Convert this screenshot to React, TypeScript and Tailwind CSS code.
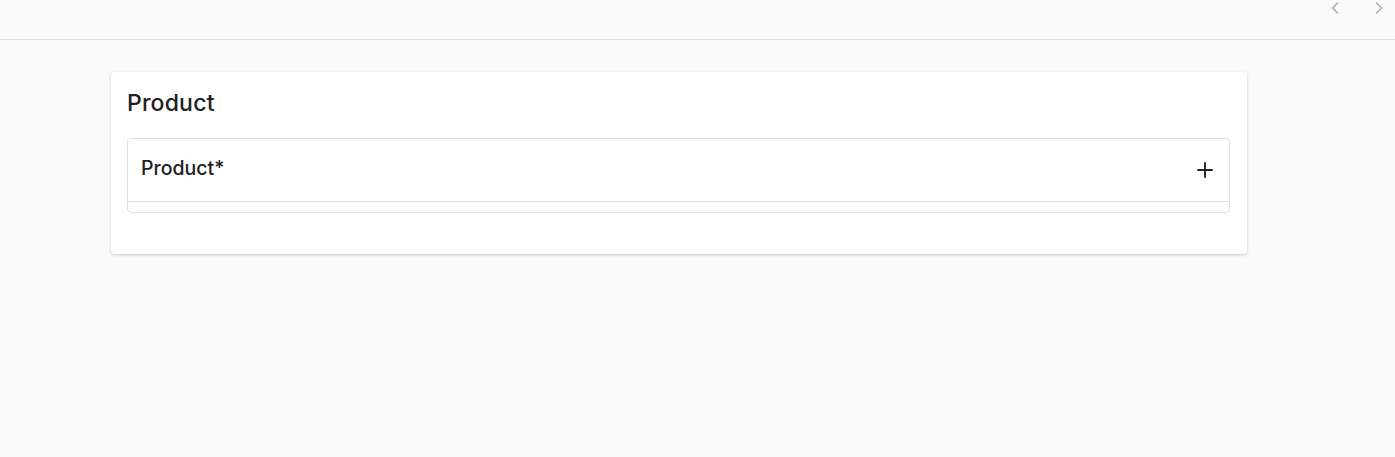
import { ChevronLeft, ChevronRight, Plus } from "lucide-react";

export default function App() {
  return (
    <div className="min-h-[457px] w-full bg-[#fafafa] font-['Inter',sans-serif] text-[#212121]">
      <header className="h-10 border-b border-[#e0e0e0] flex justify-end items-start gap-6 pr-[6px]">
        <ChevronLeft className="h-5 w-5 -mt-[2px] text-[#b0b0b0]" strokeWidth={2} />
        <ChevronRight className="h-5 w-5 -mt-[2px] text-[#b0b0b0]" strokeWidth={2} />
      </header>

      <main className="pl-[111px] pt-8">
        <section className="w-[1136px] h-[182px] bg-white rounded shadow-[0_1px_3px_rgba(0,0,0,0.2)] px-4 pt-[17px]">
          <h1 className="text-[23px] leading-7 font-medium tracking-[0.2px]">Product</h1>
          <div className="mt-[21px] mr-px border border-[#e0e0e0] rounded h-[75px] flex flex-col">
            <div className="h-[63px] flex items-center justify-between pl-[13px] pr-[12px] border-b border-[#e0e0e0]">
              <span className="text-[19.5px] font-medium -mt-[3px]">Product*</span>
              <Plus className="h-6 w-6 text-[#212121]" strokeWidth={1.9} />
            </div>
          </div>
        </section>
      </main>
    </div>
  );
}
